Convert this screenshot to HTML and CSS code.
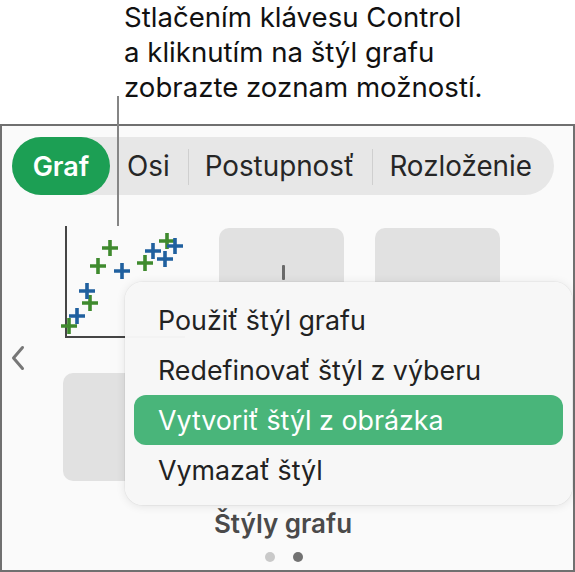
FILE: index.html
```html
<!DOCTYPE html>
<html lang="sk">
<head>
<meta charset="utf-8">
<link rel="stylesheet" href="styles.css">
</head>
<body>
<div class="page">
  <div class="callout">
    <p class="callout-text">Stlačením klávesu Control<br>a kliknutím na štýl grafu<br>zobrazte zoznam možností.</p>
  </div>
  <div class="leader"></div>
  <div class="panel">
    <div class="segmented">
      <div class="seg seg-active">Graf</div>
      <div class="seg">Osi</div>
      <div class="seg seg-sep">Postupnosť</div>
      <div class="seg seg-sep">Rozloženie</div>
    </div>
    <div class="styles">
      <div class="chev-col">
        <svg class="chev" width="16" height="26" viewBox="0 0 16 26"><path d="M12.5 2.5 L3.5 13 L12.5 23.5" fill="none" stroke="#777777" stroke-width="3" stroke-linecap="round" stroke-linejoin="round"/></svg>
      </div>
      <div class="thumbs">
        <div class="thumb thumb-chart">
          <svg width="125" height="112" viewBox="0 0 125 112">
            <path d="M3 0 V111 H122" fill="none" stroke="#454545" stroke-width="2"/>
            <g stroke="#3f8a2e" stroke-width="3.6" fill="none">
              <path d="M39 22 h16 M47 14 v16"/>
              <path d="M27 40 h16 M35 32 v16"/>
              <path d="M19 77 h16 M27 69 v16"/>
              <path d="M-2 100 h16 M6 92 v16"/>
              <path d="M74 37 h16 M82 29 v16"/>
              <path d="M96 15 h16 M104 7 v16"/>
            </g>
            <g stroke="#20609f" stroke-width="3.6" fill="none">
              <path d="M51 45 h16 M59 37 v16"/>
              <path d="M16 65 h16 M24 57 v16"/>
              <path d="M6 90 h16 M14 82 v16"/>
              <path d="M82 25 h16 M90 17 v16"/>
              <path d="M94 33 h16 M102 25 v16"/>
              <path d="M104 20 h16 M112 12 v16"/>
            </g>
          </svg>
        </div>
        <div class="thumb thumb-gray"><span class="tick"></span></div>
        <div class="thumb thumb-gray"></div>
        <div class="thumb thumb-gray"></div>
        <div class="thumb thumb-gray"></div>
        <div class="thumb thumb-gray"></div>
      </div>
    </div>
    <div class="caption">Štýly grafu</div>
    <div class="dots"><span class="dot"></span><span class="dot dot-on"></span></div>
    <div class="menu">
      <div class="menu-item">Použiť štýl grafu</div>
      <div class="menu-item">Redefinovať štýl z výberu</div>
      <div class="menu-item menu-item-active">Vytvoriť štýl z obrázka</div>
      <div class="menu-item">Vymazať štýl</div>
    </div>
  </div>
</div>
</body>
</html>
```
FILE: styles.css
```css
* { box-sizing: border-box; }
html, body { margin: 0; padding: 0; background: #ffffff; }
body {
  width: 575px;
  height: 572px;
  overflow: hidden;
  font-family: Inter, "Noto Sans", "Liberation Sans", sans-serif;
  color: #1d1d1f;
}
.page { position: relative; width: 575px; height: 572px; }

.callout { height: 124px; padding: 0 0 0 124px; }
.callout-text {
  margin: 0;
  padding-top: 0;
  font-size: 27.6px;
  line-height: 35px;
  color: #111;
}

.leader {
  position: absolute;
  left: 117px;
  top: 96px;
  width: 2px;
  height: 130px;
  background: #858585;
  z-index: 5;
}

.panel {
  position: relative;
  width: 575px;
  height: 448px;
  border: 2px solid #707070;
  background: #fafafa;
  padding-top: 11px;
}

.segmented {
  display: flex;
  align-items: center;
  margin-left: 10px;
  width: 542px;
  height: 58px;
  border-radius: 29px;
  background: #e7e7e7;
  font-size: 27.8px;
  font-weight: 400;
  color: #262626;
}
.seg {
  flex-shrink: 0;
  height: 58px;
  display: flex;
  align-items: center;
  padding: 0 18px 0 17px;
  position: relative;
  white-space: nowrap;
}
.seg-active {
  width: 98px;
  justify-content: center;
  padding: 0;
  background: #1c9f54;
  color: #ffffff;
  border-radius: 29px;
  font-weight: 600;
  font-size: 27px;
}
.seg-sep::before {
  content: "";
  position: absolute;
  left: 0;
  top: 12px;
  height: 36px;
  width: 1px;
  background: #cfcfcf;
}

.styles {
  display: flex;
  margin-top: 33px;
}
.chev-col {
  width: 61px;
  display: flex;
  align-items: center;
  padding-left: 8px;
  padding-top: 6px;
}
.thumbs {
  display: grid;
  grid-template-columns: repeat(3, 125px);
  grid-auto-rows: 108px;
  column-gap: 31px;
  row-gap: 37px;
}
.thumb { border-radius: 10px; position: relative; }
.thumb-gray { background: #e1e1e1; }
.thumb-chart svg { display: block; margin-top: -2px; overflow: visible; }
.tick {
  position: absolute;
  left: 63px;
  top: 37px;
  width: 3px;
  height: 15px;
  background: #6a6a6a;
  border-radius: 1px;
}

.caption {
  margin-top: 27px;
  text-align: center;
  padding-right: 9px;
  font-size: 26px;
  font-weight: 600;
  color: #4a4a4a;
}
.dots {
  display: flex;
  justify-content: center;
  gap: 18px;
  margin-top: 13px;
  padding-right: 8px;
}
.dot { width: 10px; height: 10px; border-radius: 50%; background: #c9c9c9; }
.dot-on { background: #727272; }

.menu {
  position: absolute;
  left: 123px;
  top: 156px;
  width: 447px;
  height: 223px;
  border-radius: 18px;
  background: rgba(247, 247, 247, 0.98);
  box-shadow: 0 1px 10px rgba(0, 0, 0, 0.10), 0 0 0 1px rgba(0, 0, 0, 0.03);
  padding: 13px 9px 10px 9px;
  z-index: 4;
}
.menu-item {
  height: 50px;
  display: flex;
  align-items: center;
  padding-left: 24px;
  font-size: 26.8px;
  color: #222;
  border-radius: 12px;
}
.menu-item-active { background: #49b57a; color: #ffffff; }
```
